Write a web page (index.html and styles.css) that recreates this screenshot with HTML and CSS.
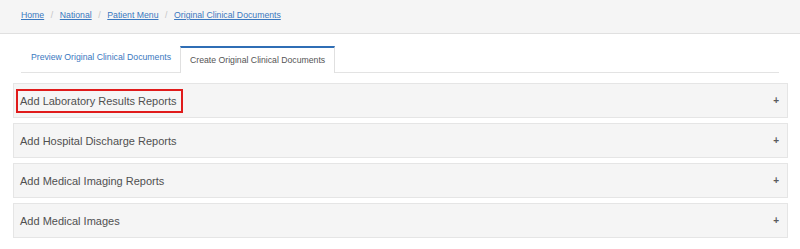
FILE: index.html
```html
<!DOCTYPE html>
<html>
<head>
<meta charset="utf-8">
<link rel="stylesheet" href="styles.css">
</head>
<body>
<div class="crumbbar">
  <nav class="crumbs">
    <a href="#">Home</a><span class="sep">/</span>
    <a href="#">National</a><span class="sep">/</span>
    <a href="#">Patient Menu</a><span class="sep">/</span>
    <a href="#">Original Clinical Documents</a>
  </nav>
</div>
<div class="tabs">
  <div class="tab">Preview Original Clinical Documents</div>
  <div class="tab active">Create Original Clinical Documents</div>
</div>
<div class="panels">
  <div class="panel"><span class="title marked">Add Laboratory Results Reports</span><span class="plus">+</span></div>
  <div class="panel"><span class="title">Add Hospital Discharge Reports</span><span class="plus">+</span></div>
  <div class="panel"><span class="title">Add Medical Imaging Reports</span><span class="plus">+</span></div>
  <div class="panel"><span class="title">Add Medical Images</span><span class="plus">+</span></div>
</div>
</body>
</html>
```
FILE: styles.css
```css
html, body { margin: 0; padding: 0; background: #fff; }
body { font-family: "Liberation Sans", Arial, sans-serif; color: #555; }

.crumbbar {
  height: 34px;
  background: #f5f5f5;
  border-bottom: 1px solid #e0e0e0;
  display: flex;
  align-items: center;
  padding-left: 21px;
  padding-bottom: 3px;
  box-sizing: border-box;
}
.crumbs { display: flex; align-items: center; font-size: 8.7px; line-height: 12px; }
.crumbs a { color: #3a78c0; text-decoration: underline; }
.crumbs .sep { color: #c4c4c4; padding: 0 6.6px; }

.tabs {
  display: flex;
  align-items: flex-end;
  margin: 12px 21px 0 21px;
  border-bottom: 1px solid #e3e3e3;
  font-size: 8.7px;
}
.tab {
  padding: 0 9px 6px 9px;
  line-height: 18px;
  color: #3a78c0;
  border: 1px solid transparent;
  border-bottom: 0;
}
.tab.active {
  color: #555;
  background: #fff;
  border-color: #e0e0e0;
  border-top: 2px solid #2f6eb5;
  line-height: 24px;
  padding: 0 9px;
  margin-bottom: -1px;
  height: 25px;
  margin-left: -1px;
}

.panels { margin: 10px 12px 0 13px; display: flex; flex-direction: column; gap: 5px; }
.panel {
  height: 35px;
  box-sizing: border-box;
  background: #f5f5f5;
  border: 1px solid #e5e5e5;
  display: flex;
  align-items: center;
  justify-content: space-between;
  padding: 0 8px 0 2px;
}
.title {
  font-size: 11px;
  line-height: 20px;
  color: #505050;
  border: 2px solid transparent;
  padding: 0 4px 0 2px;
}
.title.marked { border-color: #e01b1b; }
.plus { font-size: 10px; font-weight: bold; color: #5a5a5a; line-height: 10px; }
```
